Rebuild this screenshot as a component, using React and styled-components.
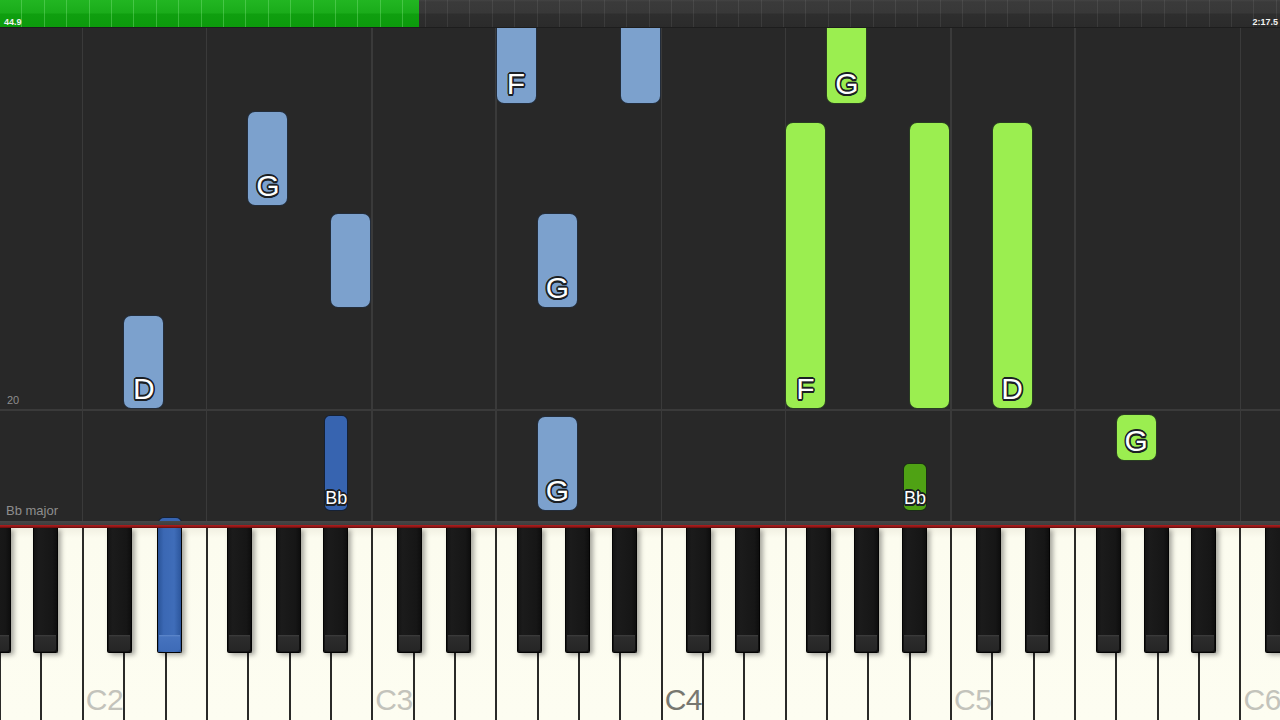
import React from 'react';
import styled, { createGlobalStyle } from 'styled-components';

const GlobalStyle = createGlobalStyle`
  html, body { margin: 0; padding: 0; background: #282828; overflow: hidden; }
  body { font-family: "Liberation Sans", Arial, sans-serif; }
`;

/* ---------- keyboard geometry (data) ---------- */
const W = 41.35;
const X0 = -0.9;
const LETTERS = ['C', 'D', 'E', 'F', 'G', 'A', 'B'];
const whiteIndex = (letter, octave) => (octave - 2) * 7 + LETTERS.indexOf(letter) + 2;
const whiteX = (i) => X0 + i * W;
const BLACK_OFFSET = { C: -16, D: -8, F: -20, G: -13, A: -7 };
const blackX = (letter, octave) => whiteX(whiteIndex(letter, octave) + 1) + BLACK_OFFSET[letter];

const WHITE_KEYS = Array.from({ length: 31 }, (_, i) => ({
  i,
  letter: LETTERS[(i + 5) % 7],
  octave: 1 + Math.floor((i + 5) / 7),
}));

const BLACK_KEYS = [];
for (let i = -1; i < 31; i++) {
  const letter = LETTERS[((i + 5) % 7 + 7) % 7];
  const octave = 1 + Math.floor((i + 5) / 7);
  if (BLACK_OFFSET[letter] !== undefined) {
    BLACK_KEYS.push({ letter, octave, x: whiteX(i + 1) + BLACK_OFFSET[letter] });
  }
}

const ACTIVE_BLACK = 'D2';

/* notes: roll-relative tops */
const NOTES = [
  { k: 'F3', kind: 'lb', top: -10, h: 86, label: 'F' },
  { k: 'B3', kind: 'lb', top: -10, h: 86 },
  { k: 'G4', kind: 'lg', top: -10, h: 86, label: 'G' },
  { k: 'G2', kind: 'lb', top: 83, h: 95, label: 'G' },
  { k: 'B2', kind: 'lb', top: 185, h: 95 },
  { k: 'G3', kind: 'lb', top: 185, h: 95, label: 'G' },
  { k: 'D2', kind: 'lb', top: 287, h: 94, label: 'D' },
  { k: 'F4', kind: 'lg', top: 94, h: 287, label: 'F' },
  { k: 'B4', kind: 'lg', top: 94, h: 287 },
  { k: 'D5', kind: 'lg', top: 94, h: 287, label: 'D' },
  { k: 'G5', kind: 'lg', top: 386, h: 47, label: 'G' },
  { k: 'A#2', kind: 'db', top: 387, h: 96, label: 'Bb' },
  { k: 'G3', kind: 'lb', top: 388, h: 95, label: 'G' },
  { k: 'A#4', kind: 'dg', top: 435, h: 48, label: 'Bb' },
  { k: 'D#2', kind: 'db', top: 489, h: 40 },
];

const noteGeom = (k) => {
  const sharp = k.includes('#');
  const letter = k[0];
  const octave = Number(k[k.length - 1]);
  if (sharp) return { x: blackX(letter, octave) + 1, w: 24.5 };
  return { x: whiteX(whiteIndex(letter, octave)) + 0.2, w: 41 };
};

const GRID_X = [2, 5, 9, 12, 16, 19, 23, 26, 30].map((i) => whiteX(i));

const NOTE_COLORS = {
  lb: '#7ca1cd',
  db: '#3764b0',
  lg: '#9bee50',
  dg: '#4fa214',
};

/* ---------- styled parts ---------- */
const Page = styled.div`
  width: 1280px;
  height: 720px;
  display: flex;
  flex-direction: column;
  overflow: hidden;
  background: #282828;
`;

const TopBar = styled.div`
  position: relative;
  flex: 0 0 28px;
  box-sizing: border-box;
  display: flex;
  align-items: flex-end;
  justify-content: space-between;
  padding: 0 2px 0 4px;
  overflow: hidden;
  border-bottom: 1px solid #1d1d1d;
  background:
    repeating-linear-gradient(to right, transparent 0, transparent 21.4px, rgba(255, 255, 255, 0.07) 21.4px, rgba(255, 255, 255, 0.07) 22.4px),
    linear-gradient(to bottom, #444 0, #3a3a3a 2px, #383838 13px, #2e2e2e 14px, #2b2b2b 100%);
  &::before {
    content: '';
    position: absolute;
    left: 0;
    top: 0;
    bottom: 0;
    width: var(--progress);
    background:
      repeating-linear-gradient(to right, transparent 0, transparent 21.4px, rgba(140, 235, 140, 0.35) 21.4px, rgba(140, 235, 140, 0.35) 22.4px),
      linear-gradient(to bottom, #22b622 0, #1aac1a 13px, #0f9f0f 14px, #0c9a0c 100%);
  }
`;

const TimeLabel = styled.span`
  position: relative;
  font-size: 9px;
  font-weight: bold;
  line-height: 10px;
  color: #f2f2f2;
  white-space: nowrap;
`;

const Roll = styled.div`
  position: relative;
  flex: 0 0 493px;
  background: #282828;
  overflow: hidden;
`;

const GridLine = styled.div.attrs((p) => ({ style: { left: `${p.$x}px` } }))`
  position: absolute;
  top: 0;
  bottom: 0;
  width: 1.5px;
  background: #3a3a3a;
`;

const MeasureLine = styled.div`
  position: absolute;
  left: 0;
  right: 0;
  top: 381px;
  height: 1.5px;
  background: #3a3a3a;
`;

const RollText = styled.span`
  position: absolute;
  left: ${(p) => p.$left}px;
  top: ${(p) => p.$top}px;
  font-size: ${(p) => p.$size}px;
  line-height: 1;
  color: #8e8e8e;
  white-space: nowrap;
`;

const Note = styled.div.attrs((p) => ({
  style: { left: `${p.$x}px`, top: `${p.$y}px`, width: `${p.$w}px`, height: `${p.$h}px` },
}))`
  position: absolute;
  box-sizing: border-box;
  border-radius: ${(p) => (p.$narrow ? 6 : 8)}px;
  border: 1.5px solid rgba(12, 16, 22, 0.8);
  background: ${(p) => NOTE_COLORS[p.$kind]};
  display: flex;
  align-items: flex-end;
  justify-content: center;
`;

const outline = (c) =>
  [
    [1.6, 0], [-1.6, 0], [0, 1.6], [0, -1.6],
    [1.2, 1.2], [-1.2, 1.2], [1.2, -1.2], [-1.2, -1.2],
    [0.8, 1.5], [-0.8, 1.5], [0.8, -1.5], [-0.8, -1.5],
  ]
    .map(([x, y]) => `${x}px ${y}px 0 ${c}`)
    .join(', ');

const NoteLabel = styled.span`
  font-family: "Liberation Sans", Arial, sans-serif;
  font-size: ${(p) => (p.$small ? 18 : 30)}px;
  line-height: 1;
  color: #ffffff;
  padding-bottom: ${(p) => (p.$small ? 3 : 4)}px;
  text-shadow: ${outline('#1b1f24')};
`;

const Divider = styled.div`
  flex: 0 0 7px;
  background: linear-gradient(to bottom, #474747 0, #3d3d3d 4px, #b01f1f 4px, #8c1414 6px, #5a0c0c 7px);
`;

const Keyboard = styled.div`
  position: relative;
  flex: 0 0 192px;
  overflow: hidden;
  background: #fdfdf0;
`;

const WhiteRow = styled.div`
  display: flex;
  height: 100%;
  margin-left: ${X0}px;
`;

const WhiteKey = styled.div`
  flex: 0 0 ${W}px;
  box-sizing: border-box;
  height: 100%;
  border-left: 2px solid #2a2a28;
  background: linear-gradient(to bottom, #f1f0e2 0, #fcfcef 10px, #fdfdf1 100%);
  display: flex;
  align-items: flex-end;
  padding: 0 0 5px 2px;
`;

const KeyName = styled.span`
  font-family: "Liberation Sans", Arial, sans-serif;
  font-size: 30px;
  line-height: 1;
  letter-spacing: -0.5px;
  color: ${(p) => (p.$middle ? '#77776f' : '#c3c3bb')};
  white-space: nowrap;
`;

const BlackKey = styled.div.attrs((p) => ({ style: { left: `${p.$x}px` } }))`
  position: absolute;
  top: 0;
  width: 25px;
  height: 125px;
  box-sizing: border-box;
  border: 1.5px solid #030303;
  border-top: none;
  border-radius: 0 0 2px 2px;
  background: ${(p) =>
    p.$active
      ? 'linear-gradient(to right, #2a5498 0, #3b68b4 25%, #3f6db9 70%, #2c569c 100%)'
      : 'linear-gradient(to right, #141414 0, #1b1b1b 20%, #161616 80%, #0e0e0e 100%)'};
  box-shadow: 3px 2px 5px rgba(0, 0, 0, 0.35);
  &::after {
    content: '';
    position: absolute;
    left: 1px;
    right: 1px;
    bottom: 1px;
    height: 16px;
    border-radius: 0 0 2px 2px;
    background: ${(p) =>
      p.$active
        ? 'linear-gradient(to bottom, #5f89cc 0, #4673be 2px, #3e6bb7 100%)'
        : 'linear-gradient(to bottom, #3e3e3e 0, #2c2c2c 2px, #252525 100%)'};
  }
`;

export default function App() {
  return (
    <>
      <GlobalStyle />
      <Page>
        <TopBar style={{ '--progress': `${(419 / 1280) * 100}%` }}>
          <TimeLabel>44.9</TimeLabel>
          <TimeLabel>2:17.5</TimeLabel>
        </TopBar>

        <Roll>
          {GRID_X.map((x) => (
            <GridLine key={x} $x={x} />
          ))}
          <MeasureLine />
          <RollText $left={7} $top={367} $size={11}>20</RollText>
          <RollText $left={6} $top={476} $size={13}>Bb major</RollText>
          {NOTES.map((n, idx) => {
            const g = noteGeom(n.k);
            const narrow = n.k.includes('#');
            return (
              <Note key={idx} $x={g.x} $w={g.w} $y={n.top} $h={n.h} $kind={n.kind} $narrow={narrow}>
                {n.label && <NoteLabel $small={narrow}>{n.label}</NoteLabel>}
              </Note>
            );
          })}
        </Roll>

        <Divider />

        <Keyboard>
          <WhiteRow>
            {WHITE_KEYS.map((k) => (
              <WhiteKey key={k.i}>
                {k.letter === 'C' && <KeyName $middle={k.octave === 4}>{`C${k.octave}`}</KeyName>}
              </WhiteKey>
            ))}
          </WhiteRow>
          {BLACK_KEYS.map((b) => (
            <BlackKey key={`${b.letter}${b.octave}`} $x={b.x} $active={`${b.letter}${b.octave}` === ACTIVE_BLACK} />
          ))}
        </Keyboard>
      </Page>
    </>
  );
}
